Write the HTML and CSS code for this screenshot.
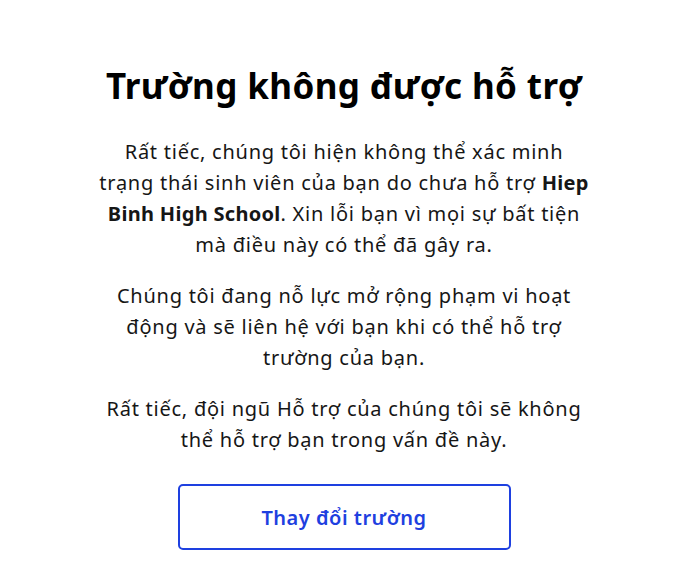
FILE: index.html
```html
<!DOCTYPE html>
<html lang="vi">
<head>
    <meta charset="UTF-8">
    <meta name="viewport" content="width=device-width, initial-scale=1.0">
    <title>Trường không được hỗ trợ</title>
    <link rel="stylesheet" href="styles.css">
</head>
<body>

    <div class="page">
        <div class="notice">
            <h1 class="notice-title">Trường không được hỗ trợ</h1>
            <p class="notice-text">Rất tiếc, chúng tôi hiện không thể xác minh trạng thái sinh viên của bạn do chưa hỗ trợ <strong>Hiep Binh High School</strong>. Xin lỗi bạn vì mọi sự bất tiện mà điều này có thể đã gây ra.</p>
            <p class="notice-text">Chúng tôi đang nỗ lực mở rộng phạm vi hoạt động và sẽ liên hệ với bạn khi có thể hỗ trợ trường của bạn.</p>
            <p class="notice-text">Rất tiếc, đội ngũ Hỗ trợ của chúng tôi sẽ không thể hỗ trợ bạn trong vấn đề này.</p>
            <button class="change-btn">Thay đổi trường</button>
        </div>
    </div>

</body>
</html>
```

FILE: styles.css
```css
body {
    margin: 0;
    background-color: #fff;
    font-family: "Noto Sans", sans-serif;
    color: #161616;
}
.page {
    display: flex;
    justify-content: center;
    padding: 61px 10px 0 0;
}
.notice {
    width: 498px;
    display: flex;
    flex-direction: column;
    align-items: center;
    text-align: center;
}
.notice-title {
    margin: 0 0 25px;
    font-size: 35px;
    line-height: 50px;
    font-weight: 700;
    letter-spacing: 0.4px;
    color: #000;
}
.notice-text {
    margin: 0 0 20px;
    font-size: 20px;
    line-height: 31px;
    letter-spacing: 0.75px;
}
.notice-text strong {
    font-weight: 700;
    letter-spacing: 0.3px;
}
.change-btn {
    margin-top: 9px;
    width: 333px;
    height: 66px;
    border: 2px solid #1e40e0;
    border-radius: 5px;
    background-color: #fff;
    color: #1e40e0;
    font-family: inherit;
    font-size: 20px;
    font-weight: 600;
    letter-spacing: 0.5px;
    cursor: pointer;
}
```
